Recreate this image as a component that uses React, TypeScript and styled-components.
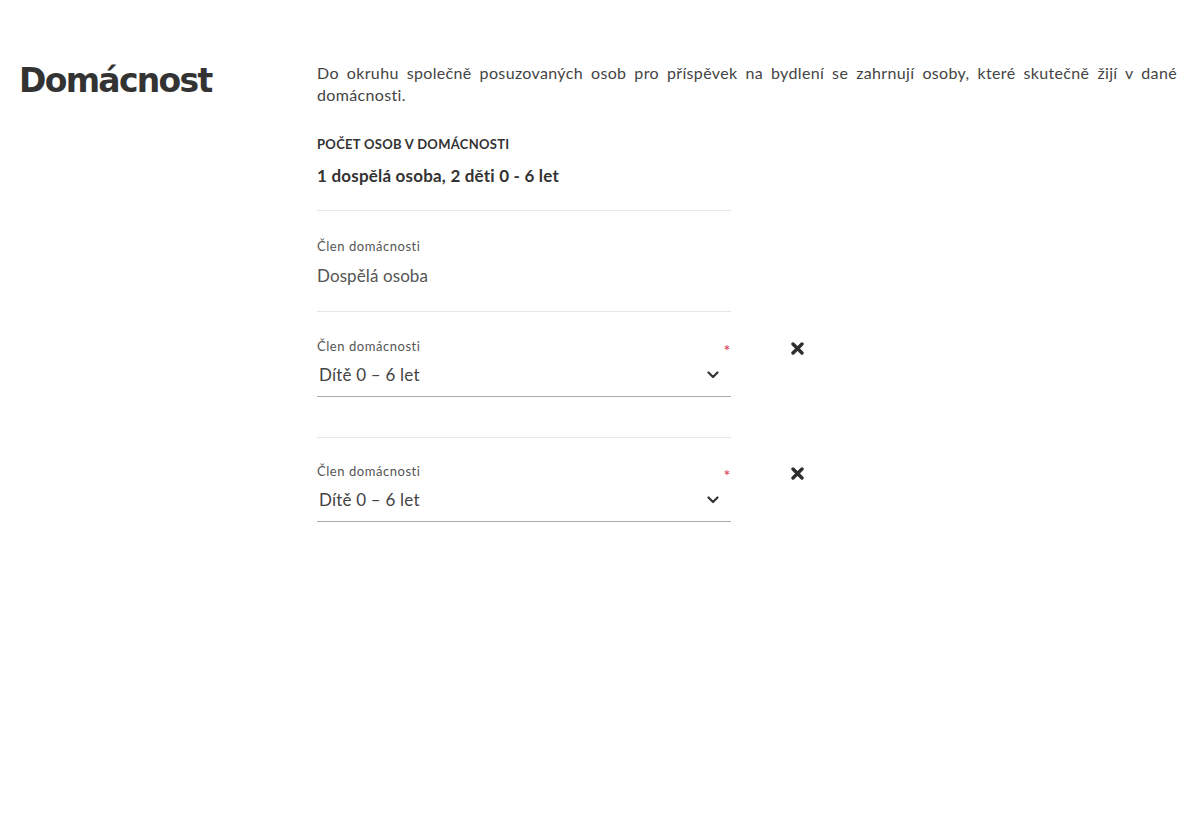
import React from 'react';
import styled, { createGlobalStyle } from 'styled-components';

const GlobalStyle = createGlobalStyle`
	html, body {
		margin: 0;
		padding: 0;
		background: #ffffff;
	}
	body {
		font-family: 'Lato', 'Open Sans', sans-serif;
		color: #333333;
	}
`;

const Page = styled.div`
	display: grid;
	grid-template-columns: 298px 860px;
	padding: 58px 0 0 19px;
	width: 1200px;
	box-sizing: border-box;
`;

const Heading = styled.h1`
	margin: 0;
	font-family: 'DejaVu Sans', Verdana, sans-serif;
	font-size: 33px;
	font-weight: 700;
	color: #333333;
	line-height: 46px;
	letter-spacing: -1.7px;
`;

const Content = styled.div`
	display: flex;
	flex-direction: column;
`;

const Intro = styled.p`
	margin: 4px 0 0;
	font-size: 16px;
	line-height: 22px;
	letter-spacing: 0.35px;
	text-align: justify;
	color: #444444;
`;

const SummaryLabel = styled.div`
	margin-top: 30px;
	font-size: 13px;
	font-weight: 700;
	text-transform: uppercase;
	letter-spacing: 0.3px;
	color: #333333;
`;

const SummaryValue = styled.div`
	margin-top: 13px;
	font-size: 17px;
	font-weight: 700;
	letter-spacing: 0.2px;
	color: #333333;
`;

const Divider = styled.hr<{ gap: number }>`
	width: 414px;
	margin: ${(p) => p.gap}px 0 0;
	border: none;
	border-top: 1px solid #e6e6e6;
`;

const MemberRow = styled.div<{ offset: number }>`
	display: flex;
	align-items: flex-start;
	margin-top: ${(p) => p.offset}px;
`;

const Field = styled.div<{ editable?: boolean }>`
	position: relative;
	width: 414px;
	box-sizing: border-box;
	border-bottom: ${(p) => (p.editable ? '1px solid #aaaaaa' : 'none')};
	padding-bottom: ${(p) => (p.editable ? '9px' : '0')};
`;

const FieldLabel = styled.div`
	font-size: 13px;
	line-height: 16px;
	color: #555555;
	letter-spacing: 0.55px;
`;

const StaticValue = styled.div`
	margin-top: 11px;
	font-size: 17px;
	line-height: 22px;
	color: #555555;
	letter-spacing: 0.1px;
`;

const SelectValue = styled.div`
	display: flex;
	align-items: center;
	justify-content: space-between;
	margin-top: 9px;
	padding: 0 12px 0 2px;
	font-size: 17px;
	line-height: 24px;
	color: #444444;
	letter-spacing: 0.2px;
`;

const Required = styled.span`
	position: absolute;
	right: 1px;
	top: 3px;
	color: #e0506a;
	font-size: 15px;
	font-weight: 700;
`;

const RemoveButton = styled.button`
	display: flex;
	align-items: center;
	justify-content: center;
	margin: 3px 0 0 59px;
	padding: 0;
	width: 14px;
	height: 14px;
	border: none;
	background: none;
	cursor: pointer;
`;

const Chevron = () => (
  <svg width="12" height="8" viewBox="0 0 12 8">
    <path d="M1.5 1.5 L6 6 L10.5 1.5" fill="none" stroke="#333" strokeWidth="2.2" strokeLinecap="round" strokeLinejoin="round" />
  </svg>
);

const Cross = () => (
  <svg width="13" height="13" viewBox="0 0 13 13">
    <path d="M2 2 L11 11 M11 2 L2 11" stroke="#2e2e2e" strokeWidth="3.4" strokeLinecap="round" />
  </svg>
);

const children = ['Dítě 0 – 6 let', 'Dítě 0 – 6 let'];

export default function App() {
  return (
    <>
      <GlobalStyle />
      <Page>
        <Heading>Domácnost</Heading>
        <Content>
          <Intro>
            Do okruhu společně posuzovaných osob pro příspěvek na bydlení se zahrnují osoby, které skutečně žijí v dané domácnosti.
          </Intro>
          <SummaryLabel>Počet osob v domácnosti</SummaryLabel>
          <SummaryValue>1 dospělá osoba, 2 děti 0 - 6 let</SummaryValue>
          <Divider gap={24} />

          <MemberRow offset={27}>
            <Field>
              <FieldLabel>Člen domácnosti</FieldLabel>
              <StaticValue>Dospělá osoba</StaticValue>
            </Field>
          </MemberRow>
          <Divider gap={24} />

          {children.map((value, i) => (
            <React.Fragment key={i}>
              <MemberRow offset={i === 0 ? 26 : 25}>
                <Field editable>
                  <FieldLabel>Člen domácnosti</FieldLabel>
                  <Required>*</Required>
                  <SelectValue>
                    <span>{value}</span>
                    <Chevron />
                  </SelectValue>
                </Field>
                <RemoveButton aria-label="Odebrat">
                  <Cross />
                </RemoveButton>
              </MemberRow>
              {i < children.length - 1 && <Divider gap={40} />}
            </React.Fragment>
          ))}
        </Content>
      </Page>
    </>
  );
}
